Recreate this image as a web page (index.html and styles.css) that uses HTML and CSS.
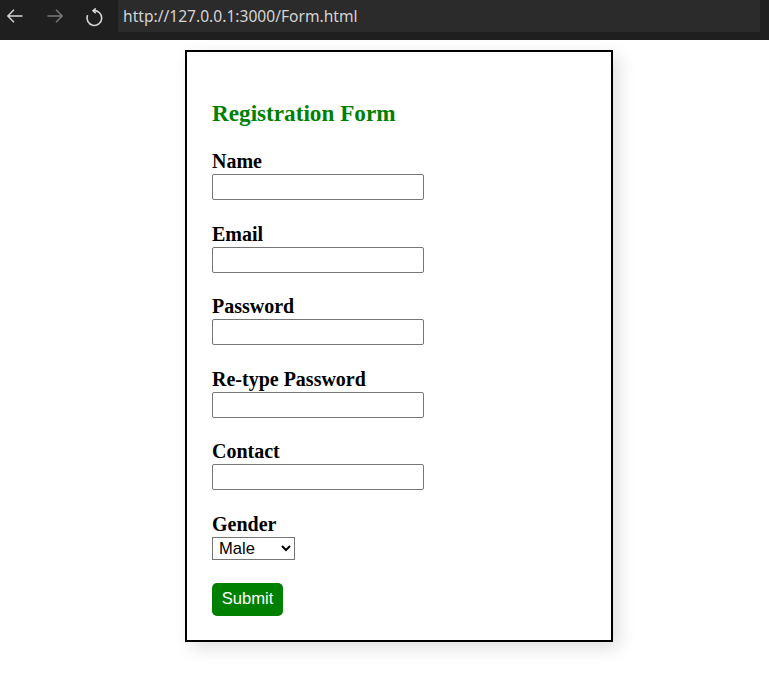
FILE: index.html
```html
<!DOCTYPE html>
<html>
<head>
<meta charset="utf-8">
<link rel="stylesheet" href="styles.css">
</head>
<body>
<div class="chrome">
  <div class="nav">
    <svg class="ico back" width="18" height="18" viewBox="0 0 18 18"><path d="M16.5 9H1.8M8 2.8L1.8 9l6.2 6.2" fill="none" stroke="#d6d6d6" stroke-width="1.4"/></svg>
    <svg class="ico fwd" width="18" height="18" viewBox="0 0 18 18"><path d="M1.5 9h14.7M10 2.8l6.2 6.2-6.2 6.2" fill="none" stroke="#7a7a7a" stroke-width="1.4"/></svg>
    <svg class="ico reload" width="19" height="19" viewBox="0 0 18 18"><path d="M2.4 6.8A7 7 0 1 0 7.8 2.6" fill="none" stroke="#d6d6d6" stroke-width="1.5"/><path d="M10.2 0.4L7.6 2.7L10.2 5" fill="none" stroke="#d6d6d6" stroke-width="1.5"/></svg>
  </div>
  <div class="address">http://127.0.0.1:3000/Form.html</div>
</div>
<div class="page">
  <form class="card">
    <h3 class="title">Registration Form</h3>
    <div class="field"><label>Name</label><input type="text"></div>
    <div class="field"><label>Email</label><input type="text"></div>
    <div class="field"><label>Password</label><input type="password"></div>
    <div class="field"><label>Re-type Password</label><input type="password"></div>
    <div class="field"><label>Contact</label><input type="text"></div>
    <div class="field"><label>Gender</label>
      <select><option>Male</option><option>Female</option></select>
    </div>
    <button type="button" class="submit">Submit</button>
  </form>
</div>
</body>
</html>
```
FILE: styles.css
```css
html, body { margin: 0; padding: 0; background: #fff; }
body { font-family: "Liberation Serif", "Times New Roman", serif; }
.chrome {
  height: 40px;
  background: #1f1f1f;
  display: flex;
  align-items: flex-start;
}
.nav {
  width: 118px;
  height: 32px;
  display: flex;
  align-items: center;
}
.ico { display: block; }
.back { margin-left: 6px; }
.fwd { margin-left: 22px; }
.reload { margin-left: 21px; margin-top: 2px; }
.address {
  width: 642px;
  height: 32px;
  background: #2b2b2b;
  color: #d4d4d4;
  font-family: "Noto Sans", "Open Sans", sans-serif;
  font-size: 15.6px;
  line-height: 32px;
  padding-left: 5px;
  box-sizing: border-box;
}
.page { padding: 10px 0 40px 185px; }
.card {
  width: 428px;
  box-sizing: border-box;
  border: 2px solid #000;
  padding: 25px 25px 24px;
  box-shadow: 6px 6px 16px rgba(0,0,0,0.13);
  display: flex;
  flex-direction: column;
  align-items: flex-start;
}
.title {
  color: #008000;
  font-size: 23.2px;
  font-weight: bold;
  line-height: 27px;
  margin: 23px 0 23.4px;
}
.field {
  display: flex;
  flex-direction: column;
  align-items: flex-start;
  margin-bottom: 22.5px;
}
.field label {
  font-size: 20px;
  font-weight: bold;
  line-height: 23px;
  color: #000;
}
.field input {
  width: 212px;
  height: 26px;
  box-sizing: border-box;
  margin: 1px 0 0;
  border: 1px solid #767676;
  border-radius: 2px;
  font-family: "Liberation Sans", Arial, sans-serif;
  font-size: 16.6px;
  padding: 1px 2px;
}
.field select {
  width: 83px;
  height: 23px;
  margin: 1px 0 0;
  box-sizing: border-box;
  font-family: "Liberation Sans", Arial, sans-serif;
  font-size: 16.6px;
  border: 1px solid #767676;
  border-radius: 0;
  background: #fff;
  color: #000;
  padding: 0 0 0 2px;
}
.submit {
  margin-top: 0.5px;
  width: 71px;
  height: 33px;
  background: #008000;
  color: #fff;
  border: none;
  border-radius: 5px;
  font-family: "Liberation Sans", Arial, sans-serif;
  font-size: 16.6px;
  padding: 0;
}
```
